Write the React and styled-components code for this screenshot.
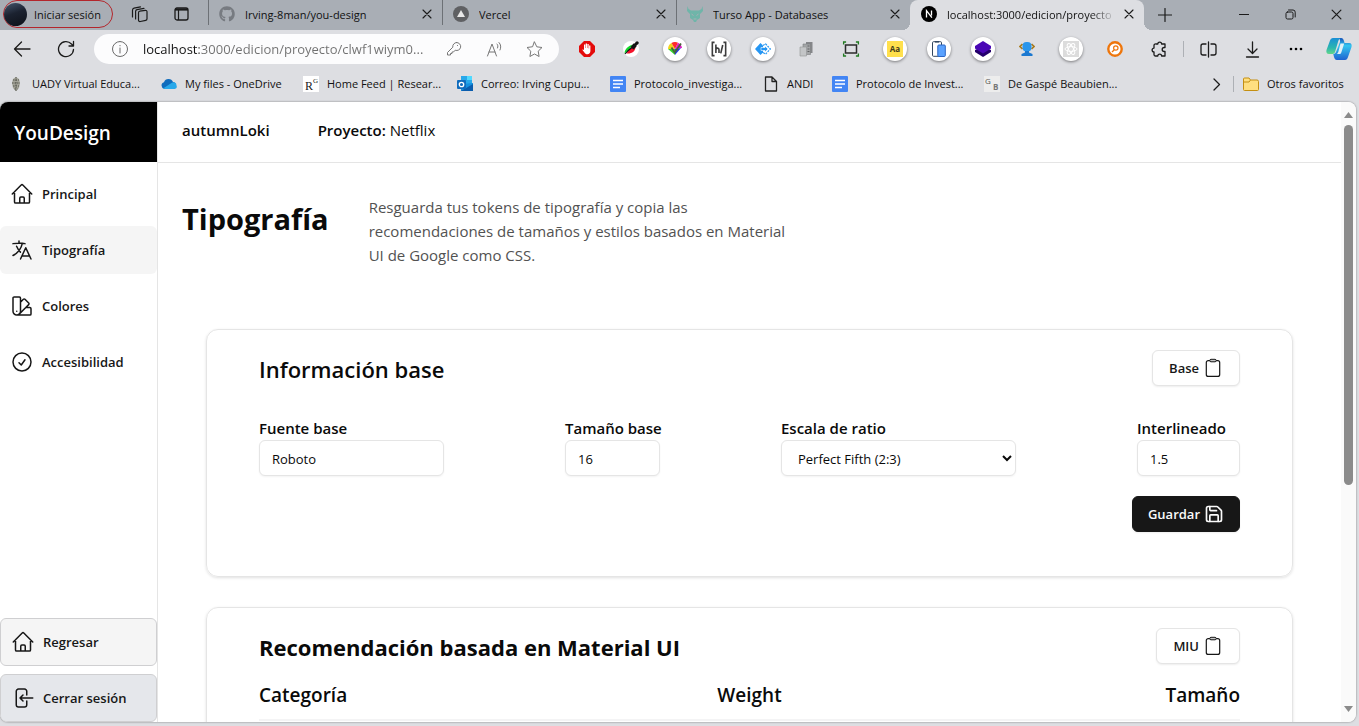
import React from "react";
import styled, { createGlobalStyle, css } from "styled-components";
import { Save } from "lucide-react";
import {
  HiOutlineHome,
  HiOutlineLanguage,
  HiOutlineSwatch,
  HiOutlineCheckCircle,
} from "react-icons/hi2";
import { FaGithub } from "react-icons/fa";

const GlobalStyle = createGlobalStyle`
  *, *::before, *::after { box-sizing: border-box; }
  body { margin: 0; background: #dddee2; color: #0a0a0a; overflow: hidden; }
  body, button, input, select {
    font-family: "Open Sans", "Noto Sans", sans-serif;
  }
  h1, h2, p { margin: 0; }
  svg { display: block; flex: none; }
`;

/* ---------- browser window ---------- */

const Window = styled.div`
  display: flex;
  flex-direction: column;
  height: 100vh;
`;

const TabStrip = styled.div`
  display: flex;
  height: 30px;
  background: #a9aeb5;
`;

const StripTools = styled.div`
  display: flex;
  align-items: center;
  flex: none;
  width: 208px;
  height: 28px;
  padding-left: 3px;
`;

const ProfileButton = styled.button`
  display: flex;
  align-items: center;
  gap: 7px;
  width: 110px;
  height: 28px;
  margin-right: 5px;
  padding: 0;
  border: 1px solid #b3262c;
  border-radius: 14px;
  background: transparent;
  font-size: 11px;
  color: #111;
  white-space: nowrap;
`;

const Avatar = styled.span`
  flex: none;
  width: 23px;
  height: 23px;
  border-radius: 50%;
  background: linear-gradient(160deg, #46566d 0%, #1b2230 45%, #0d1017 100%);
`;

const IconButton = styled.button`
  display: flex;
  align-items: center;
  justify-content: center;
  flex: none;
  width: ${(p) => p.$width || "auto"};
  padding: 0;
  border: 0;
  background: transparent;
  color: ${(p) => p.$color || "#1b1b1b"};
`;

const TabBox = styled.div`
  position: relative;
  display: flex;
  align-items: center;
  flex: 0 1 234px;
  min-width: 0;
  height: 30px;
  padding: 0 10px 2px;
  border-left: 1px solid ${(p) => (p.$active ? "transparent" : "#6d7176")};
  border-image: ${(p) =>
    p.$active ? "none" : "linear-gradient(#6d7176 24px, transparent 24px) 1"};
  ${(p) =>
    p.$active &&
    css`
      background: #dddee2;
      border-radius: 8px 8px 0 0;
      &::before,
      &::after {
        content: "";
        position: absolute;
        bottom: 0;
        width: 8px;
        height: 8px;
      }
      &::before {
        left: -9px;
        background: radial-gradient(circle at 0 0, transparent 8px, #dddee2 8px);
      }
      &::after {
        right: -8px;
        background: radial-gradient(circle at 100% 0, transparent 8px, #dddee2 8px);
      }
    `}
`;

const TabTitle = styled.span`
  flex: 1;
  min-width: 0;
  margin: 0 8px 0 10px;
  overflow: hidden;
  white-space: nowrap;
  font-size: 11px;
  color: #111;
  mask-image: ${(p) =>
    p.$fade ? "linear-gradient(90deg, #000 85%, transparent)" : "none"};
`;

const WindowControls = styled.div`
  display: flex;
  height: 28px;
  margin-left: auto;
`;

const Toolbar = styled.div`
  display: flex;
  align-items: center;
  height: 38px;
`;

const AddressBar = styled.div`
  display: flex;
  align-items: center;
  flex: 1;
  min-width: 0;
  height: 30px;
  margin: 0 6px;
  padding: 0 5px 0 17px;
  border-radius: 15px;
  background: #fcfcfd;
  color: #6b6b6b;
`;

const AddressInput = styled.input`
  flex: 1;
  min-width: 0;
  height: 24px;
  margin-left: 14px;
  padding: 0;
  border: 0;
  outline: 0;
  font-size: 13px;
  color: transparent;
  background: linear-gradient(90deg, #111 56px, #707070 56px);
  background-clip: text;
  -webkit-background-clip: text;
`;

const Divider = styled.span`
  flex: none;
  width: 1px;
  height: 16px;
  margin: 0 ${(p) => p.$gap || "0"};
  background: #adb0b5;
`;

const ExtensionDisc = styled.span`
  display: flex;
  align-items: center;
  justify-content: center;
  width: 24px;
  height: 24px;
  border-radius: 50%;
  background: #fff;
  box-shadow: 0 1px 3px rgba(0, 0, 0, 0.45);
`;

const Bookmarks = styled.nav`
  display: flex;
  align-items: center;
  gap: 16px;
  height: 32px;
  padding: 0 13px 0 8px;
`;

const BookmarkLink = styled.a`
  display: flex;
  align-items: center;
  gap: 8px;
  flex: none;
  width: ${(p) => p.$width};
  font-size: 11px;
  line-height: 16px;
  color: #111;
  text-decoration: none;
  white-space: nowrap;
`;

const BookmarkEnd = styled.div`
  display: flex;
  align-items: center;
  gap: 9px;
  margin-left: auto;
`;

/* ---------- page inside the browser ---------- */

const Viewport = styled.div`
  display: flex;
  flex: 1;
  min-height: 0;
  margin: 2px 3px 4px 0;
  overflow: hidden;
  border-radius: 8px;
  background: #fff;
  box-shadow: 0 0 2px rgba(0, 0, 0, 0.5);
`;

const Sidebar = styled.aside`
  display: flex;
  flex-direction: column;
  flex: none;
  width: 158px;
  border-right: 1px solid #e5e5e5;
`;

const Brand = styled.div`
  display: flex;
  align-items: center;
  height: 60px;
  padding: 2px 14px 0;
  background: #000;
  color: #fff;
  font-size: 19px;
  font-weight: 600;
`;

const SideNav = styled.nav`
  display: flex;
  flex-direction: column;
  gap: 8px;
  padding-top: ${(p) => (p.$top ? "8px" : "0")};
  margin-top: ${(p) => (p.$top ? "0" : "auto")};
`;

const NavItem = styled.a`
  display: flex;
  align-items: center;
  gap: 8px;
  height: 48px;
  padding: 0 10px;
  border: ${(p) => (p.$boxed ? "1px solid #cfcfd1" : "0")};
  border-radius: 6px;
  background: ${(p) => p.$fill || "transparent"};
  color: #171717;
  font-size: 13px;
  font-weight: 600;
  text-decoration: none;
  white-space: nowrap;
`;

const Content = styled.div`
  flex: 1;
  min-width: 0;
  overflow: hidden;
`;

const ProjectHeader = styled.header`
  display: flex;
  align-items: center;
  gap: 48px;
  height: 61px;
  padding: 0 24px 4px;
  border-bottom: 1px solid #e5e5e5;
  font-size: 15px;
`;

const Strong = styled.span`
  font-weight: 600;
`;

const Intro = styled.section`
  display: flex;
  gap: 40px;
  padding: 32px 24px 62px;
`;

const PageTitle = styled.h1`
  font-size: 29px;
  line-height: 48px;
  font-weight: 700;
`;

const Lead = styled.p`
  width: 430px;
  font-size: 15px;
  line-height: 24px;
  color: #525252;
`;

const Card = styled.section`
  margin: 0 48px 30px;
  padding: 20px 52px 44px;
  border: 1px solid #e5e5e5;
  border-radius: 12px;
  box-shadow: 0 1px 3px rgba(0, 0, 0, 0.12);
`;

const CardHead = styled.div`
  display: flex;
  align-items: center;
  justify-content: space-between;
  margin-bottom: ${(p) => p.$gap};
`;

const CardTitle = styled.h2`
  padding-top: 2px;
  font-size: 22px;
  line-height: 34px;
  font-weight: ${(p) => p.$weight};
`;

const Button = styled.button`
  display: flex;
  align-items: center;
  gap: 4px;
  height: 36px;
  padding: 0 ${(p) => (p.$dark ? "15px" : "16px")};
  border: 1px solid ${(p) => (p.$dark ? "#171717" : "#e5e5e5")};
  border-radius: 6px;
  background: ${(p) => (p.$dark ? "#171717" : "#fff")};
  color: ${(p) => (p.$dark ? "#fafafa" : "#171717")};
  font-size: 13px;
  font-weight: 600;
  box-shadow: 0 1px 2px rgba(0, 0, 0, 0.07);
`;

const BaseForm = styled.form`
  display: flex;
  flex-direction: column;
  gap: 20px;
`;

const FieldRow = styled.div`
  display: flex;
  justify-content: space-between;
`;

const Field = styled.label`
  display: flex;
  flex-direction: column;
  width: ${(p) => p.$width};
  font-size: 15px;
  line-height: 24px;
  font-weight: 600;
  white-space: nowrap;
`;

const controlStyle = css`
  width: 100%;
  height: 36px;
  padding: 2px 12px 0;
  border: 1px solid #e5e5e5;
  border-radius: 6px;
  background: #fff;
  color: #0a0a0a;
  font-size: 13px;
  box-shadow: 0 1px 2px rgba(0, 0, 0, 0.05);
`;

const TextInput = styled.input`
  ${controlStyle}
`;

const Select = styled.select`
  ${controlStyle}
`;

const FormEnd = styled.div`
  display: flex;
  justify-content: flex-end;
`;

const ScaleTable = styled.table`
  width: 100%;
  table-layout: fixed;
  border-collapse: collapse;
  th {
    height: 40px;
    padding: 0 0 9px;
    border-bottom: 2px solid #f4f4f5;
    font-size: 19px;
    line-height: 28px;
    font-weight: 600;
    text-align: left;
  }
  th:nth-child(2) {
    text-align: center;
  }
  th:nth-child(3) {
    text-align: right;
  }
`;

const ScrollTrack = styled.div`
  display: flex;
  flex-direction: column;
  align-items: center;
  flex: none;
  width: 15px;
  padding: 10px 0;
  background: #fafafa;
`;

const ScrollThumb = styled.div`
  flex: 0 0 60%;
  width: 9px;
  margin: 7px 0 auto;
  border-radius: 5px;
  background: #8b8b8b;
`;

/* ---------- drawings ---------- */

const Line = ({ d, size = 16, box = 16, w = 1, color = "currentColor", fill = "none" }) => (
  <svg width={size} height={size} viewBox={`0 0 ${box} ${box}`} fill={fill} stroke={color}
    strokeWidth={w} strokeLinecap="round" strokeLinejoin="round" aria-hidden="true">
    <path d={d} />
  </svg>
);

const CloseIcon = ({ size = 10 }) => <Line size={size} box={10} w={1.1} d="M1 1l8 8M9 1l-8 8" />;

const ExitIcon = () => (
  <Line size={24} box={24} w={1.5}
    d="M15.75 9V5.25A2.25 2.25 0 0 0 13.5 3h-6a2.25 2.25 0 0 0-2.25 2.25v13.5A2.25 2.25 0 0 0 7.5 21h6a2.25 2.25 0 0 0 2.25-2.25V15M12 9l-3 3m0 0 3 3m-3-3h12.75" />
);

const ClipboardIcon = () => (
  <svg width="20" height="20" viewBox="0 0 20 20" fill="none" stroke="currentColor" strokeWidth="1.2" aria-hidden="true">
    <rect x="3.300" y="2.600" width="13.400" height="15.800" rx="2" />
    <rect x="6.800" y="1.300" width="6.400" height="2.500" rx="1.200" fill="#c4c4c4" strokeWidth="1" />
  </svg>
);

const VercelIcon = () => (
  <svg width="16" height="16" viewBox="0 0 16 16"><circle cx="8" cy="8" r="8" fill="#5f6063" /><path d="M8 4l4 7H4z" fill="#e8e8e8" /></svg>
);

const TursoIcon = () => (
  <svg width="16" height="16" viewBox="0 0 16 16" fill="#6fb5a9">
    <path d="M.5 0l1 3 2.500 1.500h8L14.500 3l1-3 .5 5-3 3v4l-3 2-1 2H7l-1-2-3-2V8L0 5z" />
    <path d="M4.500 8l2 1.500M11.500 8l-2 1.500M6.500 13h3" stroke="#a9aeb5" strokeWidth="1" />
  </svg>
);

const NextIcon = () => (
  <svg width="16" height="16" viewBox="0 0 16 16"><circle cx="8" cy="8" r="8" fill="#000" /><path d="M5.500 11.500V4.700l5.400 7M10.500 4.500v5" stroke="#fff" strokeWidth="1.300" fill="none" /></svg>
);

const extensionIcons = [
  { name: "Bloqueador", art: (
    <svg width="16" height="16" viewBox="0 0 16 16"><path d="M5 0h6l5 5v6l-5 5H5l-5-5V5z" fill="#e40b0b" /><path d="M5 3.600h1.300V7h.4V2.600H8V7h.4V3H9.700v4.500h.4V4.400h1.300V10c0 2-1.200 3.200-3 3.200-1.500 0-2.300-.6-3-1.800L3.300 8.800c.5-.6 1-.5 1.700.3z" fill="#fff" /></svg>) },
  { name: "Cuentagotas", art: (
    <svg width="16" height="16" viewBox="0 0 16 16"><circle cx="8" cy="8" r="8" fill="#fff" /><path d="M1.500 12.500C1.500 8.500 5 5 9.500 3.500L7 8z" fill="#12d92a" /><path d="M3.500 12.500L7 7.500 12.500 6c0 4-3.500 7-9 6.500z" fill="#f4122a" /><path d="M2 13c2-2.500 4-4.500 7-6.500" stroke="#10131c" strokeWidth="1.100" /><path d="M7.500 6l3-3.500h1L13 .8A1.500 1.500 0 0115.200 3l-1.700 1.500v1L10.500 8.500z" fill="#141414" /></svg>) },
  { name: "Selector de color", disc: true, art: (
    <svg width="14" height="14" viewBox="0 0 14 14"><path d="M7 7L0 7A7 7 0 013.500 1z" fill="#f3d21b" /><path d="M7 7L3.500 1A7 7 0 0110 .7z" fill="#ff2a2a" /><path d="M7 7L10 .7A7 7 0 0114 6z" fill="#e01bc4" /><path d="M0 7h7v6z" fill="#33d52c" /><path d="M7 13l6-7-6 1z" fill="#2438e8" /><path d="M3.500 5.500l3.200 5L13 1.500" stroke="#47623a" strokeWidth="1.800" fill="none" /></svg>) },
  { name: "Hypothesis", disc: true, art: (
    <svg width="16" height="16" viewBox="0 0 18 18" stroke="#3c3c3c" strokeWidth="1.800" fill="none"><path d="M4 1.500H1.500v15H4M14 1.500h2.500v15H14M5.500 4v9.500M5.500 9.500c.5-2 3.500-2 3.500.3v3.700M11 14l2.200-9.500" /></svg>) },
  { name: "Comparar", disc: true, art: (
    <svg width="16" height="12" viewBox="0 0 16 12"><path d="M5.500 0L8 2.500v7L5.500 12 0 6z" fill="#2596f3" /><path d="M8 2.500L10.500.8 15.300 6l-4.800 5.200L8 9.500" fill="none" stroke="#2596f3" strokeWidth="1.200" strokeDasharray="2 1" /><path d="M6 4.500h4V3l3 3-3 3V7.500H6z" fill="#2596f3" stroke="#fff" strokeWidth=".6" /></svg>) },
  { name: "Copiar", art: (
    <svg width="16" height="16" viewBox="0 0 16 16"><path d="M7 1h6.500v11H7z" fill="#85878a" /><path d="M4 3h7.500v10.500H4z" fill="#a3a5a7" stroke="#7b7d7f" strokeWidth=".6" /><path d="M1 6h6.500v9H1z" fill="#c3c5c7" stroke="#929496" strokeWidth=".6" /><path d="M8.500 5h2M8.500 8h2M8.500 10.500h2" stroke="#606264" /></svg>) },
  { name: "Captura", art: (
    <svg width="18" height="16" viewBox="0 0 18 16" fill="none"><path d="M3.500 4h11v8h-11z" stroke="#2b2b2b" strokeWidth="1.500" /><path d="M1.600 3.500V1h2.500M13.900 1h2.500v2.500M16.400 12.500V15h-2.500M4.100 15H1.600v-2.500" stroke="#1f7a1f" strokeWidth="1.300" /></svg>) },
  { name: "Fuentes", disc: true, art: (
    <svg width="16" height="16" viewBox="0 0 16 16"><path d="M0 0h16v16H0z" fill="#ffe04d" /><text x="8" y="11" textAnchor="middle" fontSize="8" fontWeight="700" fontFamily="Open Sans, sans-serif" fill="#443c1c">Aa</text></svg>) },
  { name: "Dispositivos", disc: true, art: (
    <svg width="16" height="16" viewBox="0 0 16 16"><path d="M2.500.7h7a1 1 0 011 1v12.600a1 1 0 01-1 1h-7a1 1 0 01-1-1V1.700a1 1 0 011-1z" fill="#fff" stroke="#33475f" /><path d="M4 .8h4" stroke="#33475f" strokeWidth="1.500" /><rect x="6.800" y="4" width="7.500" height="11.500" rx="1" fill="#5aa2ff" stroke="#2c66c4" /></svg>) },
  { name: "Capas", disc: true, art: (
    <svg width="16" height="16" viewBox="0 0 16 16"><path d="M0 9l8-3.500L16 9v2L8 16l-8-5z" fill="#24006b" /><path d="M8 0l8 5v2.500L8 12.500 0 7.500V5z" fill="#4a07b5" /></svg>) },
  { name: "Trofeo", art: (
    <svg width="16" height="16" viewBox="0 0 16 16"><path d="M3.500 3L1 5.500 3.500 8M12.500 3L15 5.500 12.500 8" fill="none" stroke="#a87a1c" strokeWidth="1.700" /><rect x="3.500" y="1" width="9" height="9.500" rx="4" fill="#2a96ec" /><path d="M6 10h4v1.500l3.500 1.500v2h-11v-2L6 11.500z" fill="#1b78d0" /></svg>) },
  { name: "React", disc: true, art: (
    <svg width="16" height="16" viewBox="0 0 16 16" fill="none" stroke="#fff"><path d="M0 0h16v16H0z" fill="#dcdcdc" stroke="none" /><ellipse cx="8" cy="8" rx="6" ry="2.400" /><ellipse cx="8" cy="8" rx="6" ry="2.400" transform="rotate(60 8 8)" /><ellipse cx="8" cy="8" rx="6" ry="2.400" transform="rotate(120 8 8)" /></svg>) },
  { name: "Buscar", art: (
    <svg width="16" height="16" viewBox="0 0 16 16" fill="none"><circle cx="8" cy="8" r="6.700" fill="#fff" stroke="#ee760c" strokeWidth="2.400" /><circle cx="8.800" cy="7" r="2.200" stroke="#ee760c" strokeWidth="1.200" /><path d="M7.300 8.700L5 11" stroke="#ee760c" strokeWidth="1.300" /></svg>) },
];

const DocsIcon = () => (
  <svg width="16" height="16" viewBox="0 0 16 16"><rect width="16" height="16" rx="1" fill="#4285f4" /><path d="M3 4.500h10M3 8h10M3 11.500h7" stroke="#fff" strokeWidth="1.600" /></svg>
);

const bookmarks = [
  { label: "UADY Virtual Educa...", width: "137px", art: (
    <svg width="16" height="16" viewBox="0 0 16 16"><path d="M8 1l3 2 1 4-1 5-3 3-3-3-1-5 1-4z" fill="#a3a398" /><path d="M5 4h6M4 7h8M5 10h6M8 1v14M6.500 13h3" stroke="#55564d" strokeWidth="1" strokeDasharray="1.500 1" /></svg>) },
  { label: "My files - OneDrive", width: "126px", art: (
    <svg width="16" height="16" viewBox="0 0 16 16"><path d="M3.500 13A3.500 3.500 0 013 6.200 4.800 4.800 0 0112 6a3.600 3.600 0 01.5 7z" fill="#0f6cbd" /><path d="M2 12.500l8.500-5.500a3 3 0 015 2.500c1 2-.5 3.500-2.500 3.500H4z" fill="#28a8ea" /></svg>) },
  { label: "Home Feed | Resear...", width: "138px", art: (
    <svg width="16" height="16" viewBox="0 0 16 16"><path d="M0 0h16v16H0z" fill="#fff" /><text x="2" y="14" fontSize="12" fontFamily="Liberation Serif, serif" fill="#222">R</text><text x="10" y="7" fontSize="7" fontFamily="Liberation Serif, serif" fill="#222">G</text></svg>) },
  { label: "Correo: Irving Cupu...", width: "137px", art: (
    <svg width="16" height="16" viewBox="0 0 16 16"><path d="M4 0h11v8H4z" fill="#28a8ea" /><path d="M10 0h5v4h-5z" fill="#50d9ff" /><path d="M4 8l12-1v8H4z" fill="#1490df" /><path d="M4 15L16 8v7z" fill="#0a5cad" /><rect y="4" width="9" height="9" rx="1" fill="#0f6cbd" /><circle cx="4.500" cy="8.500" r="2.200" fill="none" stroke="#fff" strokeWidth="1.300" /></svg>) },
  { label: "Protocolo_investiga...", width: "137px", art: <DocsIcon /> },
  { label: "ANDI", width: "53px", art: <Line w={1.3} color="#222" d="M2.500 1h6.500l4.500 4.500V15h-11zM9 1v4.500h4.500" /> },
  { label: "Protocolo de Invest...", width: "136px", art: <DocsIcon /> },
  { label: "De Gaspé Beaubien...", width: "137px", art: (
    <svg width="16" height="16" viewBox="0 0 16 16"><path d="M0 0h16v16H0z" fill="#ededed" /><text x="1" y="8" fontSize="8" fontFamily="Open Sans, sans-serif" fill="#555">G</text><text x="9" y="14" fontSize="8" fontWeight="700" fontFamily="Open Sans, sans-serif" fill="#777">B</text></svg>) },
];

const tabs = [
  { title: "Irving-8man/you-design", icon: <FaGithub size={16} color="#777b81" /> },
  { title: "Vercel", icon: <VercelIcon /> },
  { title: "Turso App - Databases", icon: <TursoIcon /> },
  { title: "localhost:3000/edicion/proyecto", icon: <NextIcon />, active: true },
];

const sections = [
  { label: "Principal", Icon: HiOutlineHome },
  { label: "Tipografía", Icon: HiOutlineLanguage, active: true },
  { label: "Colores", Icon: HiOutlineSwatch },
  { label: "Accesibilidad", Icon: HiOutlineCheckCircle },
];

/* ---------- composition ---------- */

function Tabs() {
  return (
    <TabStrip>
      <StripTools>
        <ProfileButton><Avatar />Iniciar sesión</ProfileButton>
        <IconButton $width="42px" aria-label="Áreas de trabajo">
          <Line size={17} box={17} w={1.2} d="M8.800 5.200l5.500-.9a1.500 1.500 0 011.700 1.500v7a1.500 1.500 0 01-1.200 1.500l-5.500 1.200a1.500 1.500 0 01-1.800-1.500V6.700a1.500 1.500 0 011.300-1.500zM4.600 13V5.500A1.800 1.800 0 016 3.700l7-1.400M1.500 11V4.200a2 2 0 011.500-2L9.500.8" />
        </IconButton>
        <IconButton $width="42px" aria-label="Pestañas verticales">
          <svg width="15" height="14" viewBox="0 0 15 14" fill="none" stroke="currentColor"><rect x="1" y="1" width="13" height="12" rx="2" strokeWidth="1.300" /><path d="M1 2.500h13" strokeWidth="2.200" /><path d="M4.500 3v10" strokeWidth="1.200" /></svg>
        </IconButton>
      </StripTools>
      {tabs.map((t) => (
        <TabBox key={t.title} $active={t.active}>
          {t.icon}
          <TabTitle $fade={t.active}>{t.title}</TabTitle>
          <IconButton aria-label="Cerrar pestaña"><CloseIcon /></IconButton>
        </TabBox>
      ))}
      <IconButton $width="42px" aria-label="Nueva pestaña"><Line size={14} box={14} w={1.2} d="M7 .5v13M.5 7h13" /></IconButton>
      <WindowControls>
        <IconButton $width="46px" aria-label="Minimizar"><Line size={10} box={10} d="M0 5.500h10" /></IconButton>
        <IconButton $width="46px" aria-label="Restaurar"><Line size={11} box={11} d="M2.500 3h4A1.500 1.500 0 018 4.500v4A1.500 1.500 0 016.500 10h-4A1.500 1.500 0 011 8.500v-4A1.500 1.500 0 012.500 3zM3.500 1H8a2.200 2.200 0 012.200 2.200V8" /></IconButton>
        <IconButton $width="46px" aria-label="Cerrar"><CloseIcon size={11} /></IconButton>
      </WindowControls>
    </TabStrip>
  );
}

function AddressRow() {
  return (
    <Toolbar>
      <IconButton $width="44px" aria-label="Atrás"><Line size={18} box={18} w={1.300} d="M17 9H1.500M8.500 2l-7 7 7 7" /></IconButton>
      <IconButton $width="44px" aria-label="Actualizar"><Line size={18} box={18} w={1.300} d="M16.500 9.500A7.500 7.500 0 1114.500 4l2 2M16.500 1.500V6H12" /></IconButton>
      <AddressBar>
        <Line size={18} box={18} d="M9 1.500a7.500 7.500 0 100 15 7.500 7.500 0 000-15M9 8v5M9 5.500v.3" />
        <AddressInput aria-label="Dirección" readOnly value="localhost:3000/edicion/proyecto/clwf1wiym0..." />
        <IconButton $width="40px" $color="#777" aria-label="Contraseñas"><Line d="M10.500 1.500a4 4 0 11-1.300 7.700L7.500 11H6v1.500H4.500V14H1.500v-2.500L6.800 6.200a4 4 0 013.700-4.700zM11.500 4.500v.1" /></IconButton>
        <IconButton $width="40px" $color="#777" aria-label="Leer en voz alta"><Line size={17} box={17} d="M1.500 15L6 3l4.500 12M3 11h6M11 3c1 1 1.200 2.500.5 4M13 1.500c2 2 2.200 5 1 7.500" /></IconButton>
        <IconButton $width="40px" $color="#777" aria-label="Favoritos"><Line size={17} box={17} d="M8.500 1l2.300 4.800 5.200.7-3.800 3.700.9 5.300-4.600-2.500-4.600 2.500.9-5.300L1 6.500l5.200-.7z" /></IconButton>
      </AddressBar>
      {extensionIcons.map((e) => (
        <IconButton key={e.name} $width="44px" aria-label={e.name}>
          {e.disc ? <ExtensionDisc>{e.art}</ExtensionDisc> : e.art}
        </IconButton>
      ))}
      <IconButton $width="44px" aria-label="Extensiones"><Line size={17} box={17} w={1.300} d="M5 3h1.800a1.900 1.900 0 013.800 0H14v3.500h-.8a1.900 1.900 0 000 4H14V15h-3.400a1.900 1.900 0 00-3.800 0H4.500A1.500 1.500 0 013 13.500v-2.600a1.900 1.900 0 010-3.800V4.500A1.500 1.500 0 015 3z" /></IconButton>
      <Divider $gap="2px" />
      <IconButton $width="44px" aria-label="Pantalla dividida"><Line size={17} box={17} w={1.300} d="M6 3H3a2 2 0 00-2 2v7a2 2 0 002 2h3M11 3h3a2 2 0 012 2v7a2 2 0 01-2 2h-3M8.500 1v15" /></IconButton>
      <IconButton $width="44px" aria-label="Descargas"><Line size={17} box={17} w={1.300} d="M8.500 1v11M4 8l4.500 4.500L13 8M2.500 16h12" /></IconButton>
      <IconButton $width="44px" aria-label="Más"><svg width="14" height="4" viewBox="0 0 14 4"><circle cx="2" cy="2" r="1.300" /><circle cx="7" cy="2" r="1.300" /><circle cx="12" cy="2" r="1.300" /></svg></IconButton>
      <IconButton $width="41px" aria-label="Copilot">
        <svg width="26" height="24" viewBox="0 0 26 24">
          <defs>
            <linearGradient id="cpA" x1="0" y1="0" x2="0" y2="1"><stop offset="0" stopColor="#1a8fd6" /><stop offset=".6" stopColor="#2bb5b0" /><stop offset="1" stopColor="#62d68a" /></linearGradient>
            <linearGradient id="cpB" x1="0" y1="0" x2="0" y2="1"><stop offset="0" stopColor="#1450b8" /><stop offset=".35" stopColor="#33c5f0" /><stop offset="1" stopColor="#1e62d0" /></linearGradient>
          </defs>
          <path d="M15 1c2 0 2.600 1.500 3 3l.5 2H23c2.500 0 3 2 2.500 4L22 20c-.6 2-1.500 3-3 3h-8c-2 0-2.500-1.500-3-3l-.7-3c1.500 0 2.200-.7 2.700-2l4-10c.5-1.500-.5-4-2-4z" fill="url(#cpB)" />
          <path d="M7 1h8c-1.500.3-2.200 1.500-2.700 3L9 15c-.6 1.500-1.500 2-3 2H3c-2.500 0-3-2-2.500-4L4 3.500C4.600 2 5.500 1 7 1z" fill="url(#cpA)" />
          <path d="M14.500 6.500h3.700L15.300 15.500c-.4 1-1 1.500-2 1.500h-2.300c.6-.5 1-1.300 1.300-2z" fill="#dff1f8" />
        </svg>
      </IconButton>
    </Toolbar>
  );
}

function BookmarkRow() {
  return (
    <Bookmarks aria-label="Favoritos">
      {bookmarks.map((b) => (
        <BookmarkLink key={b.label} href="#" $width={b.width}>{b.art}{b.label}</BookmarkLink>
      ))}
      <BookmarkEnd>
        <IconButton $width="16px" aria-label="Más favoritos"><Line size={13} box={13} w={1.300} d="M4 1l5.500 5.500L4 12" /></IconButton>
        <Divider />
        <BookmarkLink href="#" $width="103px">
          <svg width="16" height="16" viewBox="0 0 16 16"><path d="M.5 3a1 1 0 011-1H6l1.500 2H14a1.500 1.500 0 011.500 1.500v8a1 1 0 01-1 1h-13a1 1 0 01-1-1z" fill="#ffdf80" stroke="#c48f12" /><path d="M.5 6H6l1.500-2" fill="none" stroke="#c48f12" /></svg>
          Otros favoritos
        </BookmarkLink>
      </BookmarkEnd>
    </Bookmarks>
  );
}

export default function App() {
  return (
    <Window>
      <GlobalStyle />
      <Tabs />
      <AddressRow />
      <BookmarkRow />
      <Viewport>
        <Sidebar>
          <Brand>YouDesign</Brand>
          <SideNav $top>
            {sections.map(({ label, Icon, active }) => (
              <NavItem key={label} href="#" $fill={active ? "#f5f5f5" : undefined}>
                <Icon size={24} />{label}
              </NavItem>
            ))}
          </SideNav>
          <SideNav>
            <NavItem href="#" $boxed $fill="#f5f5f5"><HiOutlineHome size={24} />Regresar</NavItem>
            <NavItem as="button" $boxed $fill="#e5e7eb"><ExitIcon />Cerrar sesión</NavItem>
          </SideNav>
        </Sidebar>
        <Content>
          <ProjectHeader>
            <Strong>autumnLoki</Strong>
            <span><Strong>Proyecto:</Strong> Netflix</span>
          </ProjectHeader>
          <main>
            <Intro>
              <PageTitle>Tipografía</PageTitle>
              <Lead>
                Resguarda tus tokens de tipografía y copia las recomendaciones de tamaños y
                estilos basados en Material UI de Google como CSS.
              </Lead>
            </Intro>
            <Card>
              <CardHead $gap="30px">
                <CardTitle $weight={600}>Información base</CardTitle>
                <Button>Base<ClipboardIcon /></Button>
              </CardHead>
              <BaseForm onSubmit={(e) => e.preventDefault()}>
                <FieldRow>
                  <Field $width="185px">Fuente base<TextInput defaultValue="Roboto" /></Field>
                  <Field $width="95px">Tamaño base<TextInput defaultValue="16" /></Field>
                  <Field $width="235px">Escala de ratio
                    <Select defaultValue="fifth"><option value="fifth">Perfect Fifth (2:3)</option></Select>
                  </Field>
                  <Field $width="103px">Interlineado<TextInput defaultValue="1.5" /></Field>
                </FieldRow>
                <FormEnd>
                  <Button $dark>Guardar<Save size={20} /></Button>
                </FormEnd>
              </BaseForm>
            </Card>
            <Card>
              <CardHead $gap="16px">
                <CardTitle $weight={700}>Recomendación basada en Material UI</CardTitle>
                <Button>MIU<ClipboardIcon /></Button>
              </CardHead>
              <ScaleTable>
                <thead><tr><th>Categoría</th><th>Weight</th><th>Tamaño</th></tr></thead>
              </ScaleTable>
            </Card>
          </main>
        </Content>
        <ScrollTrack>
          <svg width="9" height="6" viewBox="0 0 9 6" fill="#8b8b8b"><path d="M4.500 0L9 6H0z" /></svg>
          <ScrollThumb />
          <svg width="9" height="6" viewBox="0 0 9 6" fill="#8b8b8b"><path d="M4.500 6L0 0h9z" /></svg>
        </ScrollTrack>
      </Viewport>
    </Window>
  );
}
